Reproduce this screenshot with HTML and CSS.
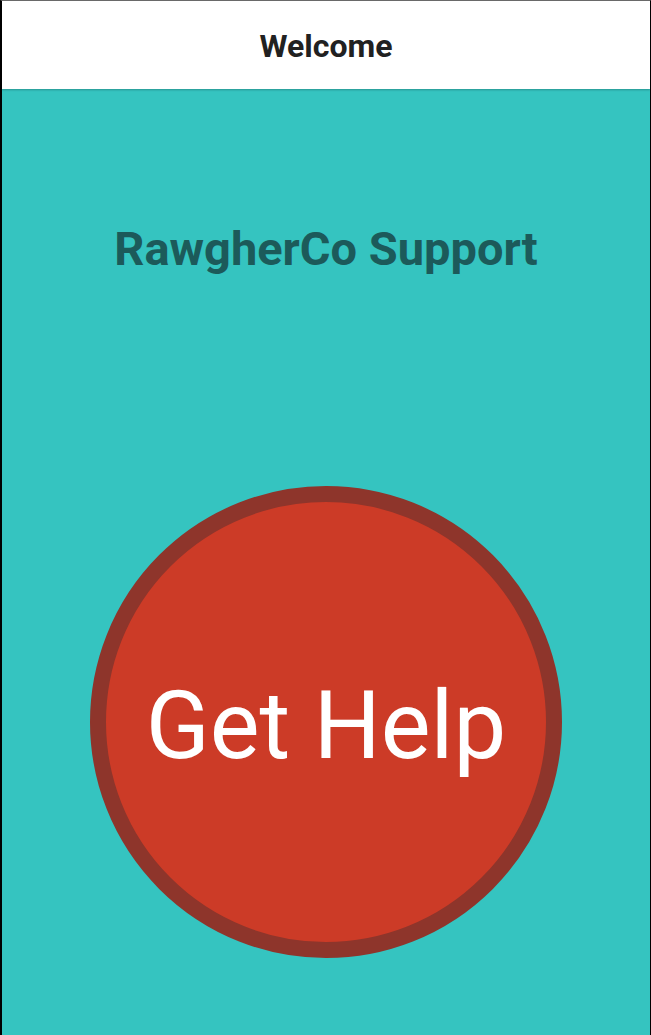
FILE: index.html
```html
<!DOCTYPE html>
<html lang="en">
<head>
<meta charset="utf-8">
<title>Welcome</title>
<link rel="stylesheet" href="styles.css">
</head>
<body>
<div class="app">
  <header class="topbar">
    <h1 class="topbar-title">Welcome</h1>
  </header>
  <main class="content">
    <h2 class="brand">RawgherCo Support</h2>
    <button class="help-btn" type="button"><span class="help-label">Get Help</span></button>
  </main>
</div>
</body>
</html>
```
FILE: styles.css
```css
html, body {
  margin: 0;
  padding: 0;
  height: 100%;
}
body {
  font-family: Roboto, "Liberation Sans", sans-serif;
  background: #35c4c0;
}
.app {
  box-sizing: border-box;
  height: 100%;
  display: flex;
  flex-direction: column;
  border-left: 2px solid #000;
  border-right: 1px solid #000;
  border-top: 1px solid #6b6b6b;
}
.topbar {
  position: relative;
  z-index: 1;
  height: 88px;
  flex: 0 0 88px;
  background: #fff;
  display: flex;
  align-items: center;
  justify-content: center;
  box-shadow: 0 1px 2px rgba(0,0,0,0.25);
}
.topbar-title {
  margin: 0;
  padding-top: 2px;
  font-size: 32px;
  font-weight: 700;
  color: #212121;
  line-height: 1;
}
.content {
  flex: 1;
  background: #35c4c0;
  display: flex;
  flex-direction: column;
  align-items: center;
}
.brand {
  margin: 136px 0 0;
  font-size: 47px;
  line-height: 1;
  font-weight: 700;
  color: #1c5a5a;
}
.help-btn {
  margin-top: 214px;
  box-sizing: border-box;
  width: 472px;
  height: 472px;
  border-radius: 50%;
  border: 16px solid #8e352b;
  background: #cc3b27;
  color: #fff;
  display: flex;
  align-items: center;
  justify-content: center;
  padding: 8px 0 0;
  font-family: Roboto, "Liberation Sans", sans-serif;
  cursor: pointer;
}
.help-label {
  font-size: 94px;
  line-height: 1;
  font-weight: 400;
}
```
